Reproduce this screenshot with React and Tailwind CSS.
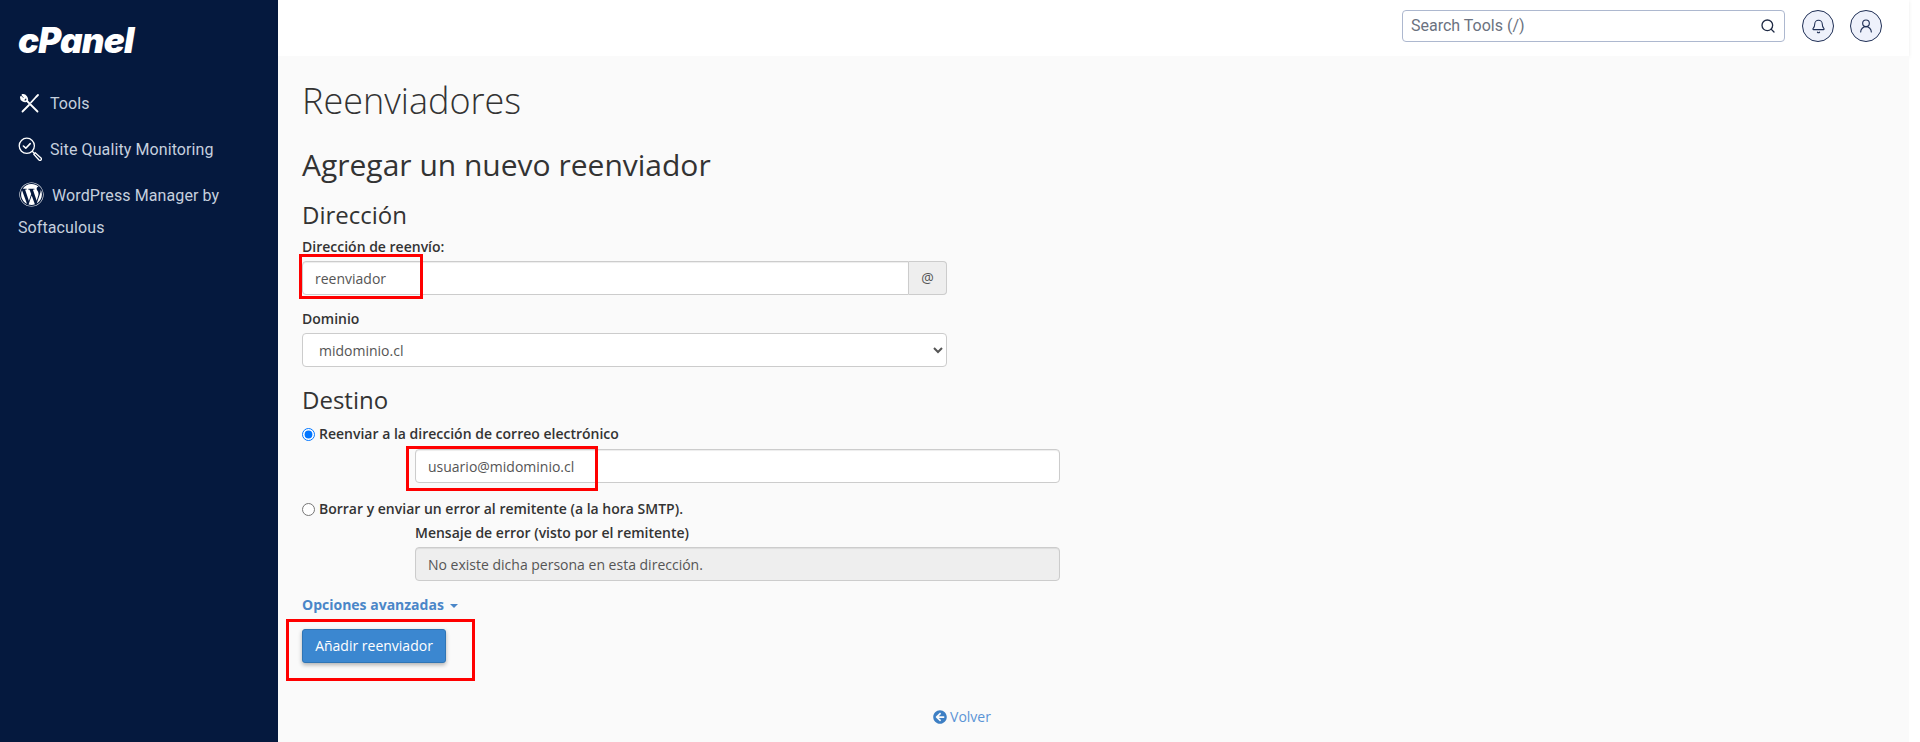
import React from "react";
import { Search, Bell, UserRound } from "lucide-react";
import { FaWordpress, FaArrowCircleLeft } from "react-icons/fa";

function ToolsIcon() {
  return (
    <svg width="20" height="20" viewBox="0 0 20 20" fill="none" stroke="currentColor" strokeWidth="1.8" strokeLinecap="round" strokeLinejoin="round">
      <path d="M2.5 18.5 L9 12" />
      <path d="M11 9.5 L16 4 L18 2" />
      <path d="M17.5 18.5 L7 8" />
      <path d="M7 8 C8 5 5.5 1.5 2.5 2 L5 5 L3.5 6.5 L1 4 C0.5 7 4 9 7 8 Z" />
    </svg>
  );
}

function QualityIcon() {
  return (
    <svg width="24" height="24" viewBox="0 0 24 24" fill="none" stroke="currentColor" strokeWidth="1.3" strokeLinecap="round" strokeLinejoin="round">
      <circle cx="8.8" cy="8.8" r="7.6" />
      <path d="M5.4 9 L7.8 11.2 L12.2 6.6" strokeWidth="1.6" />
      <path d="M14.5 14.5 L16 16" />
      <path d="M15.8 17.2 L17.2 15.8 L23 21 A1.4 1.4 0 0 1 21 23 Z" />
    </svg>
  );
}

function SideItem({ icon, gap, children }) {
  return (
    <div className="leading-8 mb-[14px]">
      <span className={`inline-block align-middle text-white -mt-1 ${gap}`}>{icon}</span>
      {children}
    </div>
  );
}

function Field({ value, disabled, className }) {
  return (
    <input
      readOnly
      value={value}
      disabled={disabled}
      className={`block h-[34px] w-full rounded-[4px] border px-3 text-sm text-[#555] outline-none shadow-[inset_0_1px_1px_rgba(0,0,0,0.075)] ${
        disabled ? "border-[#ccc] bg-[#eee]" : "border-[#ccc] bg-white"
      } ${className || ""}`}
    />
  );
}

function RedBox({ className }) {
  return <div className={`absolute border-[3px] border-[#f00] pointer-events-none ${className}`}></div>;
}

export default function App() {
  return (
    <div className="flex h-screen overflow-hidden bg-white font-['Open_Sans',sans-serif] text-[#333]">
      <aside className="w-[278px] shrink-0 bg-[#05193e] px-[18px] font-['Roboto',sans-serif] text-base tracking-[0.1px] text-[#c6d0de]">
        <div className="mt-[20px] mb-[28px] h-[40px] font-['Inter',sans-serif] text-[35px] leading-[40px] font-black tracking-[-0.8px] text-white italic">
          cPanel
        </div>
        <SideItem gap="mr-[10px] ml-[2px]" icon={<ToolsIcon />}>Tools</SideItem>
        <SideItem gap="mr-[8px]" icon={<QualityIcon />}>Site Quality Monitoring</SideItem>
        <SideItem gap="mr-[8px] ml-px" icon={<FaWordpress size={25} />}>WordPress Manager by Softaculous</SideItem>
      </aside>

      <div className="flex w-[1631px] shrink-0 flex-col">
        <header className="flex h-[56px] shrink-0 items-start justify-end bg-white pt-[10px] pr-[27px] shadow-[0_1px_4px_rgba(0,0,0,0.08)]">
          <div className="flex h-[32px] w-[383px] items-center justify-between rounded-[4px] border border-[#adb8cf] px-[8px] font-['Roboto',sans-serif] text-base text-[#6b7280]">
            <span>Search Tools (/)</span>
            <Search size={16} strokeWidth={2} className="text-[#1f2a44]" />
          </div>
          <div className="ml-[17px] flex h-[32px] w-[32px] items-center justify-center rounded-full border border-[#1f2f55] bg-[#eef1fb] text-[#1f2f55]">
            <Bell size={15} strokeWidth={1.7} />
          </div>
          <div className="ml-[16px] flex h-[32px] w-[32px] items-center justify-center rounded-full border border-[#1f2f55] bg-[#eef1fb] text-[#1f2f55]">
            <UserRound size={16} strokeWidth={1.7} />
          </div>
        </header>

        <main className="relative flex-1 bg-[#fafafa] pl-[24px]">
          <div className="w-[1320px]">
            <h1 className="pt-[20px] text-4xl leading-[50px] font-light text-[#333]">Reenviadores</h1>
            <h2 className="mt-[22px] text-[30px] leading-[33px]">Agregar un nuevo reenviador</h2>

            <div className="w-[645px]">
              <h3 className="mt-[19px] text-2xl leading-[30px]">Dirección</h3>
              <label className="mt-[7px] block text-sm leading-5 font-[570]">Dirección de reenvío:</label>
              <div className="mt-[4px] flex">
                <Field value="reenviador" className="rounded-r-none" />
                <span className="flex h-[34px] w-[38px] shrink-0 items-center justify-center rounded-r-[4px] border border-l-0 border-[#ccc] bg-[#eee] text-sm text-[#555]">
                  @
                </span>
              </div>
              <label className="mt-[14px] block text-sm leading-5 font-[570]">Dominio</label>
              <select
                defaultValue="midominio.cl"
                className="mt-[4px] block h-[34px] w-full rounded-[4px] border border-[#ccc] bg-white px-3 text-sm text-[#555]"
              >
                <option>midominio.cl</option>
              </select>
              <h3 className="mt-[18px] text-2xl leading-[30px]">Destino</h3>
            </div>

            <div className="mt-[9px] w-[758px]">
              <label className="flex h-5 items-center text-sm font-[570]">
                <input type="radio" name="fwd" defaultChecked className="mr-[4px] h-[13px] w-[13px]" />
                Reenviar a la dirección de correo electrónico
              </label>
              <div className="mt-[5px] pl-[113px]">
                <Field value="usuario@midominio.cl" />
              </div>
              <label className="mt-[16px] flex h-5 items-center text-sm font-[570]">
                <input type="radio" name="fwd" className="mr-[4px] h-[13px] w-[13px]" />
                Borrar y enviar un error al remitente (a la hora SMTP).
              </label>
              <div className="pl-[113px]">
                <label className="mt-[4px] block text-sm leading-5 font-[570]">Mensaje de error (visto por el remitente)</label>
                <Field value="No existe dicha persona en esta dirección." disabled className="mt-[4px]" />
              </div>
            </div>

            <div className="mt-[14px] flex h-5 items-center text-sm font-bold text-[#4a86c8]">
              Opciones avanzadas
              <span className="mt-[2px] ml-[6px] h-0 w-0 border-x-4 border-t-4 border-x-transparent border-t-[#4a86c8]"></span>
            </div>

            <button className="mt-[14px] block h-[34px] w-[144px] rounded-[3px] border border-[#2f75b5] bg-[#3b87d0] text-sm text-white shadow-[0_2px_4px_rgba(0,0,0,0.3)]">
              Añadir reenviador
            </button>

            <div className="mt-[44px] flex items-center justify-center gap-[3px] text-sm text-[#5a94d6]">
              <FaArrowCircleLeft size={14} className="text-[#3d7fc4]" />
              Volver
            </div>
          </div>

          <RedBox className="top-[198px] left-[21px] h-[45px] w-[124px]" />
          <RedBox className="top-[390px] left-[128px] h-[45px] w-[192px]" />
          <RedBox className="top-[563px] left-[8px] h-[62px] w-[189px]" />
        </main>
      </div>
    </div>
  );
}
